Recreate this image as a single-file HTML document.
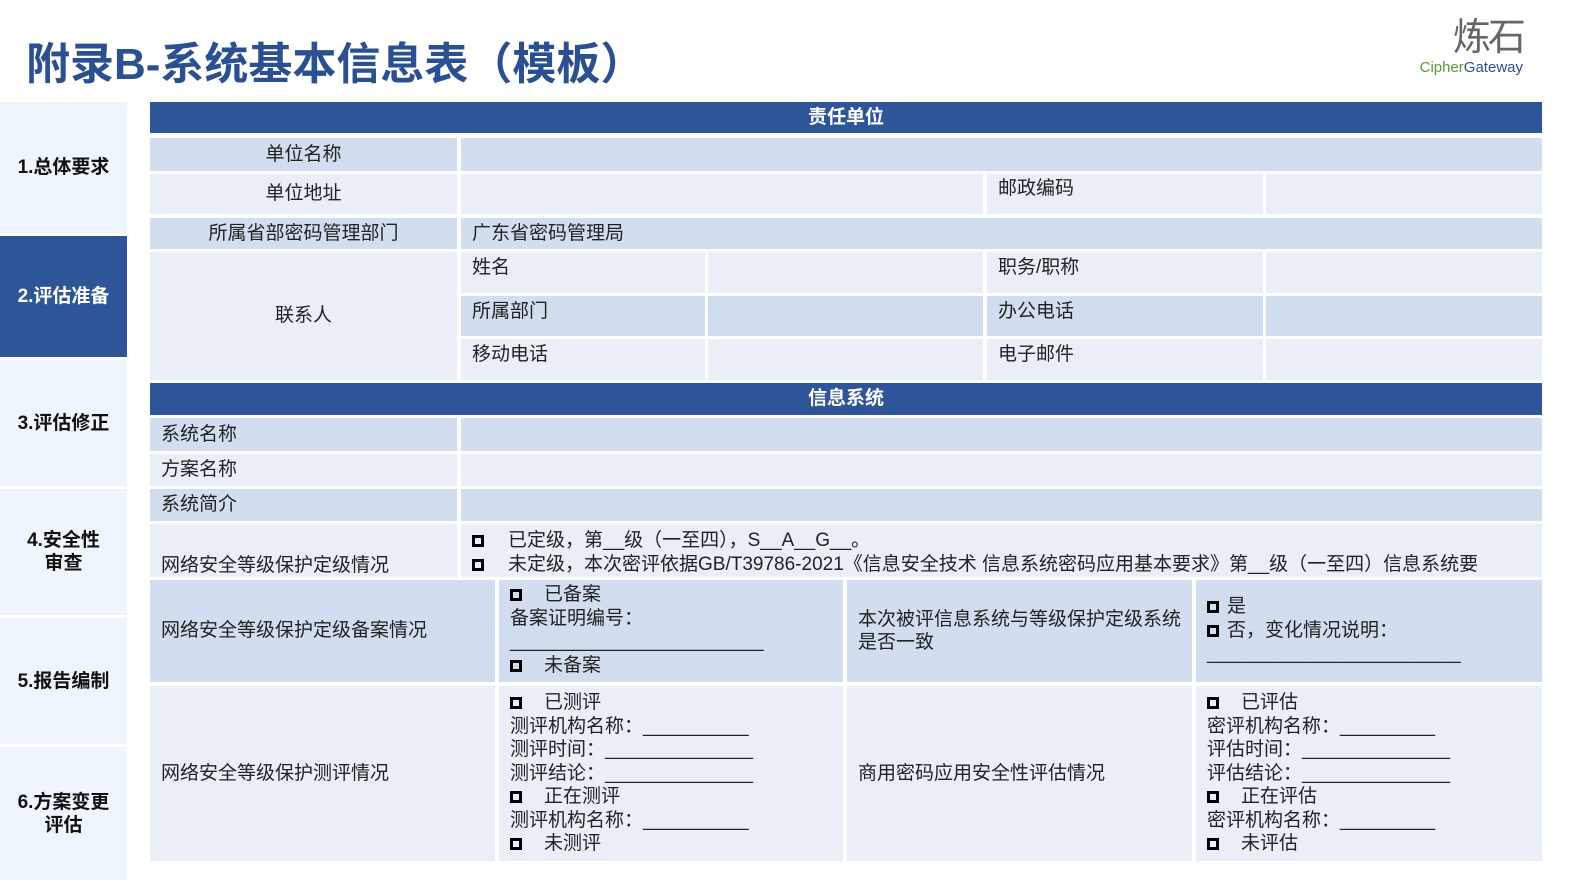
<!DOCTYPE html>
<html><head><meta charset="utf-8"><style>
*{margin:0;padding:0;box-sizing:border-box}
html,body{width:1587px;height:892px;overflow:hidden}
body{background:#fff;position:relative;font-family:"Liberation Sans","Noto Sans CJK SC",sans-serif;color:#222}
.t{position:absolute;left:26px;top:28px;font-size:44px;font-weight:bold;color:#2a5091}
.logo1{position:absolute;right:64px;top:14px;font-size:38px;color:#666;letter-spacing:-3px;line-height:48px}
.logo2{position:absolute;right:64px;top:59px;font-size:15px;color:#5a9a3a;line-height:18px}
.logo2 b{font-weight:normal;color:#2a5091}
.nav{position:absolute;left:0;width:127px;background:#eef5fc;display:flex;align-items:center;justify-content:center;text-align:center;font-weight:bold;font-size:19px;line-height:23px;color:#111}
.nav.a{background:#2e5597;color:#fff}
.c{position:absolute;font-size:19px;line-height:23.5px;padding-left:11px;display:flex;align-items:center;white-space:nowrap}
.d{background:#d2deef}.l{background:#e9eef7}
.h{background:#2e5597;color:#fff;font-weight:bold;justify-content:center;padding:0}
.ctr{justify-content:center;padding:0}
.b{display:inline-block;width:12px;height:12px;border:3px solid #000;margin-right:22px;vertical-align:-1px}
.b2{margin-right:8px}
.blk{display:block}
</style></head><body>
<div class="t">附录B-系统基本信息表（模板）</div>
<div class="logo1">炼石</div>
<div class="logo2">Cipher<b>Gateway</b></div>

<div class="nav" style="top:102px;height:131px">1.总体要求</div>
<div class="nav a" style="top:236px;height:121px">2.评估准备</div>
<div class="nav" style="top:360px;height:126px">3.评估修正</div>
<div class="nav" style="top:489px;height:126px">4.安全性<br>审查</div>
<div class="nav" style="top:618px;height:126px">5.报告编制</div>
<div class="nav" style="top:747px;height:133px">6.方案变更<br>评估</div>

<div class="c h" style="left:150px;top:102px;width:1392px;height:31px">责任单位</div>
<div class="c d ctr" style="left:150px;top:138px;width:307px;height:33px">单位名称</div>
<div class="c d" style="left:461px;top:138px;width:1081px;height:33px"></div>
<div class="c l ctr" style="left:150px;top:174px;width:307px;height:40px">单位地址</div>
<div class="c l" style="left:461px;top:174px;width:522px;height:40px"></div>
<div class="c l" style="left:987px;top:174px;width:276px;height:40px;align-items:flex-start;padding-top:3px">邮政编码</div>
<div class="c l" style="left:1266px;top:174px;width:276px;height:40px"></div>
<div class="c d ctr" style="left:150px;top:218px;width:307px;height:31px">所属省部密码管理部门</div>
<div class="c d" style="left:461px;top:218px;width:1081px;height:31px">广东省密码管理局</div>

<div class="c l ctr" style="left:150px;top:252px;width:307px;height:128px">联系人</div>
<div class="c l" style="left:461px;top:252px;width:244px;height:41px;align-items:flex-start;padding-top:4px">姓名</div>
<div class="c l" style="left:708px;top:252px;width:275px;height:41px"></div>
<div class="c l" style="left:987px;top:252px;width:276px;height:41px;align-items:flex-start;padding-top:4px">职务/职称</div>
<div class="c l" style="left:1266px;top:252px;width:276px;height:41px"></div>
<div class="c d" style="left:461px;top:296px;width:244px;height:40px;align-items:flex-start;padding-top:4px">所属部门</div>
<div class="c d" style="left:708px;top:296px;width:275px;height:40px"></div>
<div class="c d" style="left:987px;top:296px;width:276px;height:40px;align-items:flex-start;padding-top:4px">办公电话</div>
<div class="c d" style="left:1266px;top:296px;width:276px;height:40px"></div>
<div class="c l" style="left:461px;top:339px;width:244px;height:41px;align-items:flex-start;padding-top:4px">移动电话</div>
<div class="c l" style="left:708px;top:339px;width:275px;height:41px"></div>
<div class="c l" style="left:987px;top:339px;width:276px;height:41px;align-items:flex-start;padding-top:4px">电子邮件</div>
<div class="c l" style="left:1266px;top:339px;width:276px;height:41px"></div>

<div class="c h" style="left:150px;top:383px;width:1392px;height:32px">信息系统</div>
<div class="c d" style="left:150px;top:418px;width:307px;height:33px">系统名称</div>
<div class="c d" style="left:461px;top:418px;width:1081px;height:33px"></div>
<div class="c l" style="left:150px;top:454px;width:307px;height:32px">方案名称</div>
<div class="c l" style="left:461px;top:454px;width:1081px;height:32px"></div>
<div class="c d" style="left:150px;top:489px;width:307px;height:32px">系统简介</div>
<div class="c d" style="left:461px;top:489px;width:1081px;height:32px"></div>
<div class="c l" style="left:150px;top:524px;width:307px;height:53px;align-items:flex-end;padding-bottom:0px">网络安全等级保护定级情况</div>
<div class="c l" style="left:461px;top:524px;width:1081px;height:53px;display:block;padding-top:5px;overflow:hidden"><span class="blk"><span class="b" style="margin-right:24px"></span>已定级，第__级（一至四），S__A__G__。</span><span class="blk"><span class="b" style="margin-right:24px"></span>未定级，本次密评依据GB/T39786-2021《信息安全技术 信息系统密码应用基本要求》第__级（一至四）信息系统要</span></div>

<div class="c d" style="left:150px;top:580px;width:345px;height:102px">网络安全等级保护定级备案情况</div>
<div class="c d" style="left:499px;top:580px;width:344px;height:102px;display:block;padding-top:3px"><span class="blk"><span class="b"></span>已备案</span><span class="blk">备案证明编号：</span><span class="blk">________________________</span><span class="blk"><span class="b"></span>未备案</span></div>
<div class="c d" style="left:847px;top:580px;width:345px;height:102px;white-space:normal">本次被评信息系统与等级保护定级系统是否一致</div>
<div class="c d" style="left:1196px;top:580px;width:346px;height:102px;display:block;padding-top:15px"><span class="blk"><span class="b b2"></span>是</span><span class="blk"><span class="b b2"></span>否，变化情况说明：</span><span class="blk">________________________</span></div>

<div class="c l" style="left:150px;top:686px;width:345px;height:175px">网络安全等级保护测评情况</div>
<div class="c l" style="left:499px;top:686px;width:344px;height:175px;display:block;padding-top:5px"><span class="blk"><span class="b"></span>已测评</span><span class="blk">测评机构名称：__________</span><span class="blk">测评时间：______________</span><span class="blk">测评结论：______________</span><span class="blk"><span class="b"></span>正在测评</span><span class="blk">测评机构名称：__________</span><span class="blk"><span class="b"></span>未测评</span></div>
<div class="c l" style="left:847px;top:686px;width:345px;height:175px">商用密码应用安全性评估情况</div>
<div class="c l" style="left:1196px;top:686px;width:346px;height:175px;display:block;padding-top:5px"><span class="blk"><span class="b"></span>已评估</span><span class="blk">密评机构名称：_________</span><span class="blk">评估时间：______________</span><span class="blk">评估结论：______________</span><span class="blk"><span class="b"></span>正在评估</span><span class="blk">密评机构名称：_________</span><span class="blk"><span class="b"></span>未评估</span></div>
</body></html>
